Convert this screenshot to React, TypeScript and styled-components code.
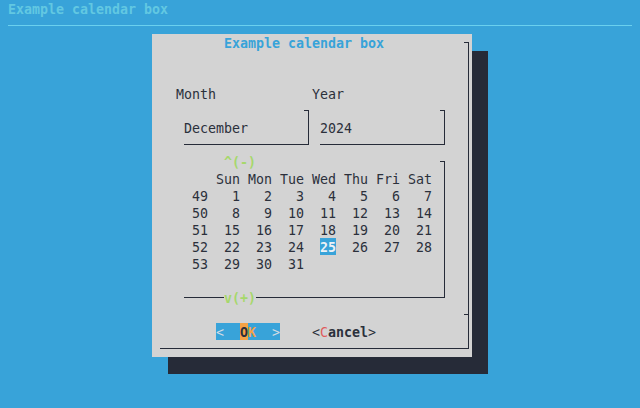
import React from 'react';
import styled, { createGlobalStyle } from 'styled-components';

const BLUE = '#38a3d9';
const GRAY = '#d3d3d3';
const DARK = '#262b38';
const INK = '#2b303b';
const GREEN = '#a6d86c';

const Global = createGlobalStyle`
  html, body { margin: 0; padding: 0; background: ${BLUE}; }
  body { width: 640px; height: 408px; overflow: hidden; }
`;

const Screen = styled.div`
  display: grid;
  grid-template-columns: repeat(80, 8px);
  grid-template-rows: repeat(24, 17px);
  width: 640px;
  height: 408px;
  background: ${BLUE};
  font-family: "DejaVu Sans Mono", "Liberation Mono", monospace;
  font-size: 13.29px;
  line-height: 17px;
  white-space: pre;
`;

const BackTitle = styled.div`
  grid-column: 2 / span 20;
  grid-row: 1;
  padding-top: 1px;
  color: #62c8e2;
  font-weight: bold;
`;

const Rule = styled.div`
  grid-column: 2 / span 78;
  grid-row: 2;
  align-self: center;
  height: 1px;
  background: #6ad0ee;
`;

const Shadow = styled.div`
  grid-column: 22 / span 40;
  grid-row: 4 / span 19;
  background: ${DARK};
`;

const Dialog = styled.div`
  grid-column: 20 / span 40;
  grid-row: 3 / span 19;
  display: grid;
  grid-template-columns: repeat(40, 8px);
  grid-template-rows: repeat(19, 17px);
  background: ${GRAY};
  color: ${INK};
`;

type Place = { $col: number; $row: number; $span?: number; $rows?: number };

const Frame = styled.div<Place>`
  grid-column: ${p => p.$col} / span ${p => p.$span ?? 1};
  grid-row: ${p => p.$row} / span ${p => p.$rows ?? 1};
  margin: 8px 3px 8px 0;
  border-right: 1px solid ${DARK};
  border-bottom: 1px solid ${DARK};
`;

const Tick = styled.div<Place>`
  grid-column: ${p => p.$col};
  grid-row: ${p => p.$row};
  align-self: start;
  justify-self: start;
  margin-top: 8px;
  width: 5px;
  height: 1px;
  background: ${DARK};
`;

const Title = styled.div`
  grid-column: 10 / span 20;
  grid-row: 1;
  padding-top: 1px;
  color: ${BLUE};
  font-weight: bold;
`;

const Text = styled.div<Place>`
  grid-column: ${p => p.$col} / span ${p => p.$span ?? 1};
  grid-row: ${p => p.$row};
  padding-top: 1px;
`;

const Arrow = styled.div<Place>`
  grid-column: ${p => p.$col} / span 4;
  grid-row: ${p => p.$row};
  padding-top: 1px;
  color: ${GREEN};
  font-weight: bold;
  background: ${GRAY};
  z-index: 1;
`;

const Calendar = styled.div`
  grid-column: 6 / span 30;
  grid-row: 9 / span 6;
  display: grid;
  grid-template-columns: 16px repeat(7, 32px);
  grid-template-rows: repeat(6, 17px);
  justify-items: end;
`;

const DayCell = styled.span<{ $sel?: boolean }>`
  padding-top: 1px;
  color: ${p => (p.$sel ? '#eef2f6' : INK)};
  background: ${p => (p.$sel ? BLUE : 'transparent')};
  font-weight: ${p => (p.$sel ? 'bold' : 'normal')};
`;

const Button = styled.div<{ $col: number; $active?: boolean }>`
  grid-column: ${p => p.$col} / span 8;
  grid-row: 18;
  padding-top: 1px;
  background: ${p => (p.$active ? BLUE : 'transparent')};
  color: ${p => (p.$active ? '#d4dce4' : INK)};
`;

const Key = styled.span<{ $active?: boolean }>`
  display: inline-block;
  height: 17px;
  margin-top: -1px;
  padding-top: 1px;
  box-sizing: border-box;
  color: ${p => (p.$active ? INK : '#e05a5a')};
  background: ${p => (p.$active ? '#f4a244' : 'transparent')};
  font-weight: ${p => (p.$active ? 'bold' : 'normal')};
  vertical-align: top;
`;

const Label = styled.span<{ $active?: boolean }>`
  color: ${p => (p.$active ? '#f4a244' : INK)};
  font-weight: bold;
`;

const days = ['Sun', 'Mon', 'Tue', 'Wed', 'Thu', 'Fri', 'Sat'];
const weeks: { n: number; d: (number | null)[] }[] = [
  { n: 49, d: [1, 2, 3, 4, 5, 6, 7] },
  { n: 50, d: [8, 9, 10, 11, 12, 13, 14] },
  { n: 51, d: [15, 16, 17, 18, 19, 20, 21] },
  { n: 52, d: [22, 23, 24, 25, 26, 27, 28] },
  { n: 53, d: [29, 30, 31, null, null, null, null] },
];

export default function App() {
  return (
    <>
      <Global />
      <Screen>
        <BackTitle>Example calendar box</BackTitle>
        <Rule />
        <Shadow />
        <Dialog>
          <Frame $col={2} $row={1} $span={39} $rows={19} />
          <Tick $col={40} $row={1} />
          <Tick $col={40} $row={17} />
          <Title>Example calendar box</Title>

          <Text $col={4} $row={4} $span={6}>Month</Text>
          <Text $col={21} $row={4} $span={5}>Year</Text>

          <Frame $col={5} $row={5} $span={16} $rows={3} />
          <Tick $col={20} $row={5} />
          <Text $col={5} $row={6} $span={8}>December</Text>

          <Frame $col={22} $row={5} $span={16} $rows={3} />
          <Tick $col={37} $row={5} />
          <Text $col={22} $row={6} $span={4}>2024</Text>

          <Frame $col={5} $row={8} $span={33} $rows={9} />
          <Tick $col={37} $row={8} />
          <Arrow $col={10} $row={8}>^(-)</Arrow>
          <Arrow $col={10} $row={16}>v(+)</Arrow>

          <Calendar>
            <span />
            {days.map(d => (
              <DayCell key={d}>{d}</DayCell>
            ))}
            {weeks.map(w => (
              <React.Fragment key={w.n}>
                <DayCell>{w.n}</DayCell>
                {w.d.map((d, i) => (
                  <DayCell key={i} $sel={d === 25}>{d ?? ''}</DayCell>
                ))}
              </React.Fragment>
            ))}
          </Calendar>

          <Button $col={9} $active>
            {'<  '}
            <Key $active>O</Key>
            <Label $active>K</Label>
            {'  >'}
          </Button>
          <Button $col={21}>
            {'<'}
            <Key>C</Key>
            <Label>ancel</Label>
            {'>'}
          </Button>
        </Dialog>
      </Screen>
    </>
  );
}
